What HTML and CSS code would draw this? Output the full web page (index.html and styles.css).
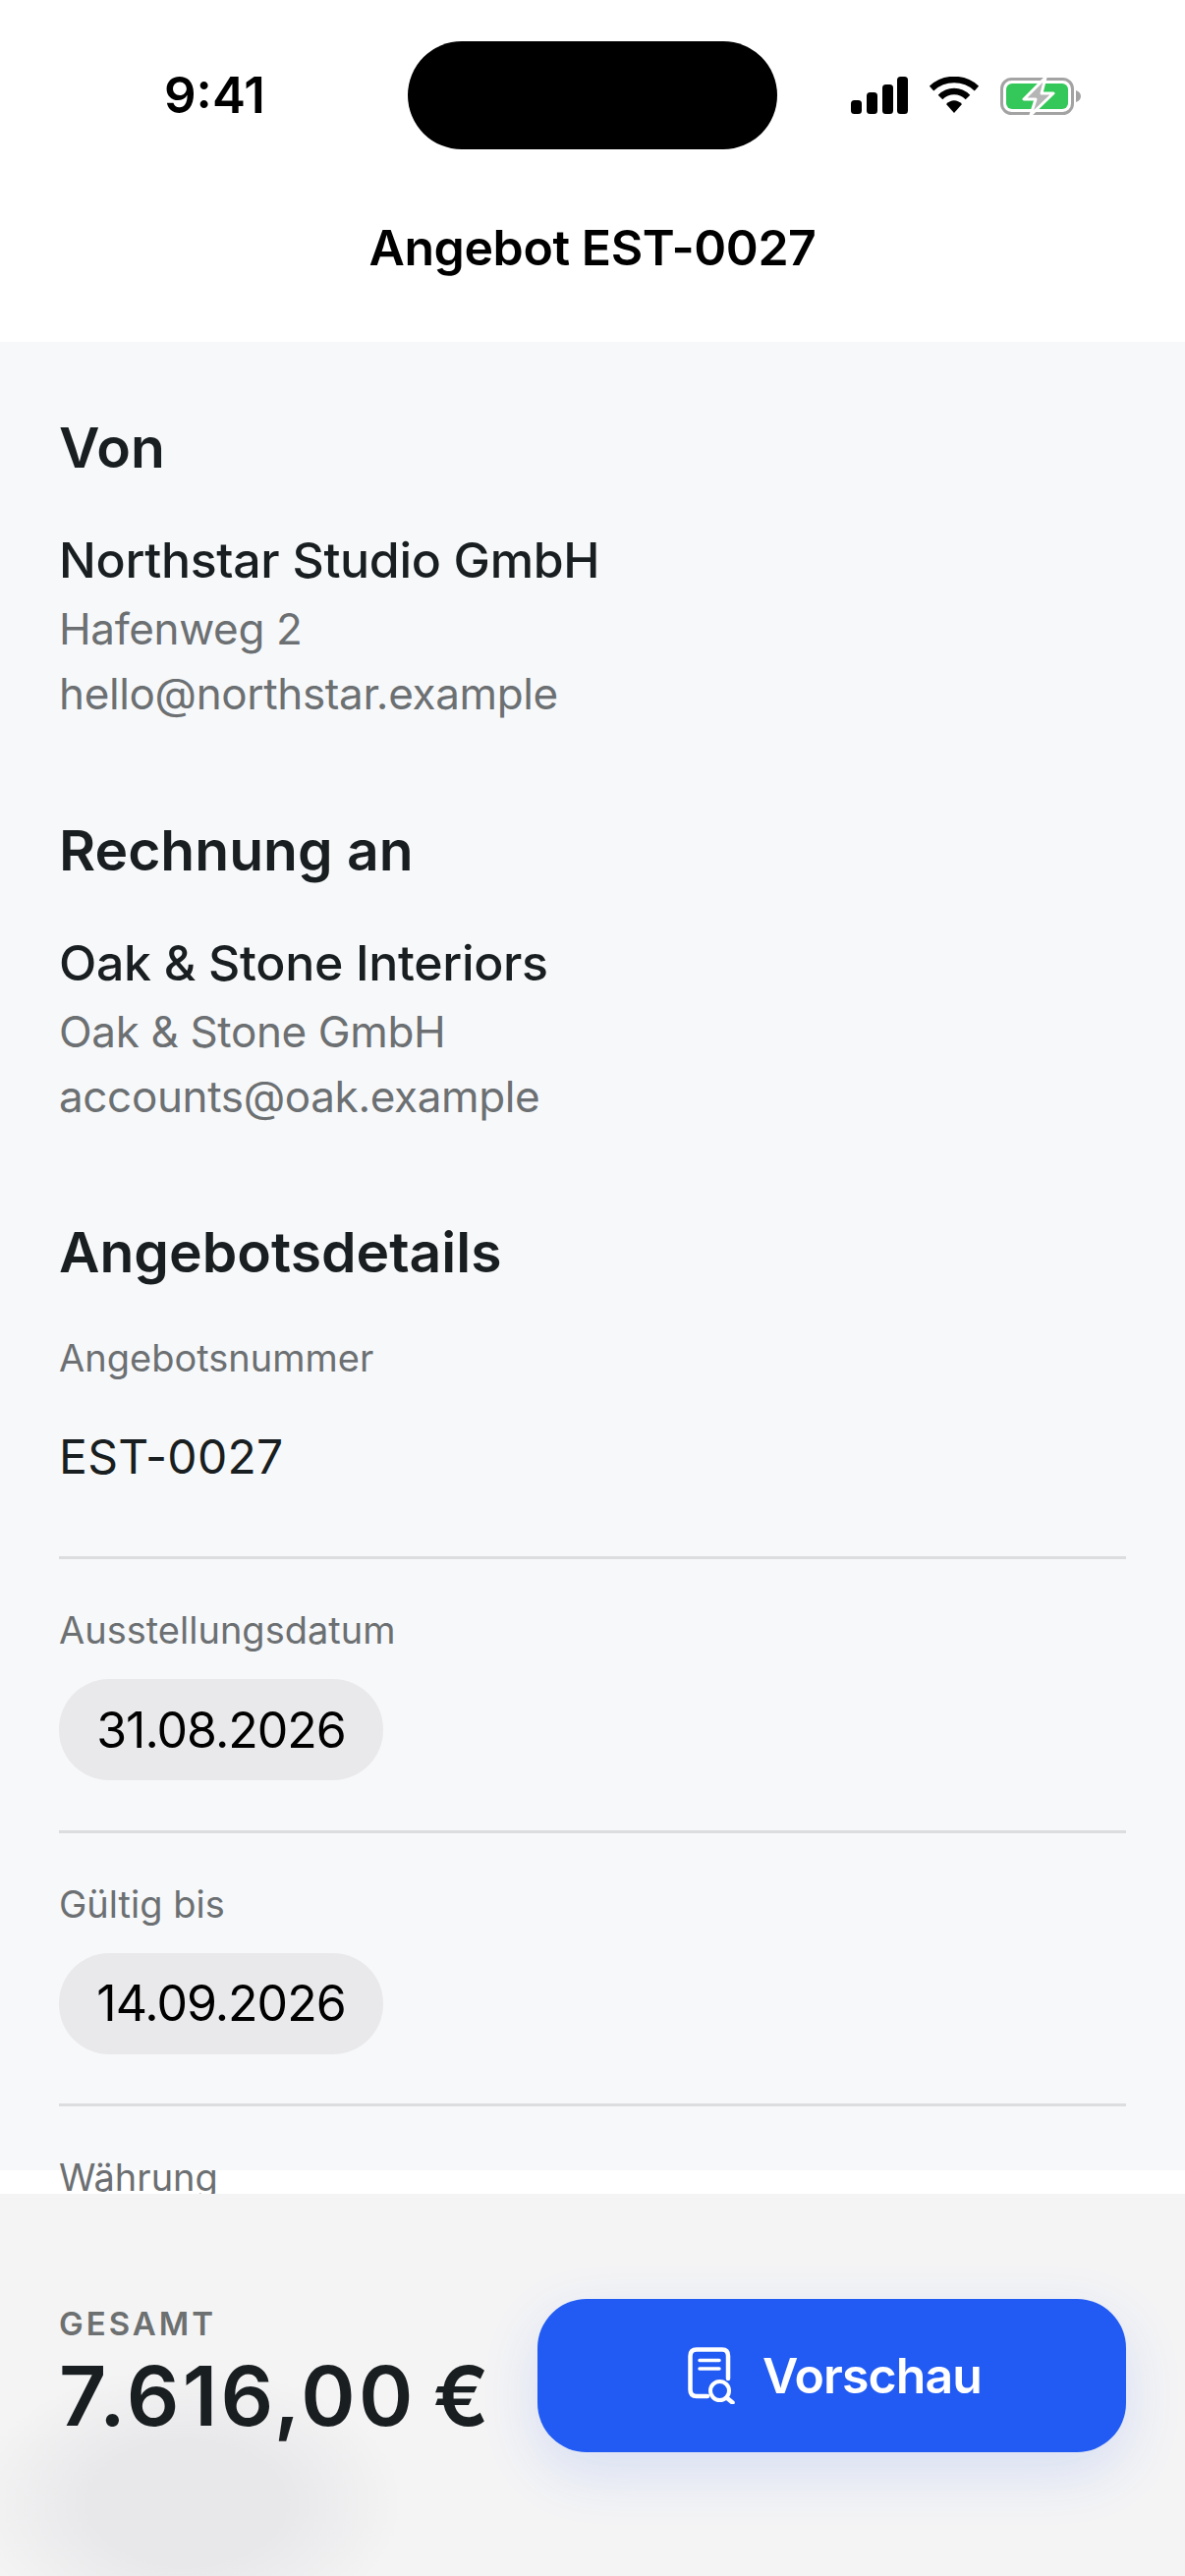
FILE: index.html
```html
<!DOCTYPE html>
<html lang="de">
<head>
    <meta charset="UTF-8">
    <meta name="viewport" content="width=device-width, initial-scale=1.0">
    <title>Angebot EST-0027</title>
    <link rel="stylesheet" href="styles.css">
</head>
<body>

    <div class="phone">
        <header class="top">
            <div class="status-bar">
                <span class="time">9:41</span>
                <div class="island"></div>
                <div class="status-icons">
                    <svg class="signal" width="58" height="38" viewBox="0 0 58 38">
                        <rect x="0" y="24" width="11" height="14" rx="3.5"/>
                        <rect x="16" y="16" width="11" height="22" rx="3.5"/>
                        <rect x="32" y="8" width="11" height="30" rx="3.5"/>
                        <rect x="47" y="0" width="11" height="38" rx="3.5"/>
                    </svg>
                    <svg class="wifi" width="50" height="37" viewBox="0 0 50 37">
                        <path d="M2 12 C15 0 35 0 48 12" fill="none" stroke="#000" stroke-width="6.5"/>
                        <path d="M11 21 C19 13 31 13 39 21" fill="none" stroke="#000" stroke-width="6.5"/>
                        <path d="M17 28 C22 23 28 23 33 28 L25 37 Z"/>
                    </svg>
                    <svg class="battery" width="82" height="40" viewBox="0 0 82 40">
                        <rect x="1.5" y="2.5" width="72" height="35" rx="10" fill="none" stroke="#a3a3a3" stroke-width="3"/>
                        <rect x="6" y="7" width="63" height="26" rx="6" fill="#34c759"/>
                        <path d="M77 14 C80 15 82 17 82 20 C82 23 80 25 77 26 Z" fill="#a3a3a3"/>
                        <path d="M46 1 L24 23 H36 L31 39 L54 17 H42 Z" fill="#b5b5b5" stroke="#fff" stroke-width="3" stroke-linejoin="round"/>
                    </svg>
                </div>
            </div>
            <h1>Angebot EST-0027</h1>
        </header>

        <main class="content">
            <section class="block">
                <h2>Von</h2>
                <p class="name">Northstar Studio GmbH</p>
                <p class="sub">Hafenweg 2</p>
                <p class="sub">hello@northstar.example</p>
            </section>

            <section class="block">
                <h2>Rechnung an</h2>
                <p class="name">Oak &amp; Stone Interiors</p>
                <p class="sub">Oak &amp; Stone GmbH</p>
                <p class="sub">accounts@oak.example</p>
            </section>

            <section class="details">
                <h2>Angebotsdetails</h2>
                <div class="field">
                    <div class="label">Angebotsnummer</div>
                    <div class="value">EST-0027</div>
                </div>
                <div class="field">
                    <div class="label">Ausstellungsdatum</div>
                    <div class="date-pill">31.08.2026</div>
                </div>
                <div class="field">
                    <div class="label">Gültig bis</div>
                    <div class="date-pill">14.09.2026</div>
                </div>
                <div class="field">
                    <div class="label">Währung</div>
                </div>
            </section>
        </main>

        <footer class="bottom-bar">
            <div class="blob"></div>
            <div class="total">
                <div class="total-label">GESAMT</div>
                <div class="total-amount">7.616,00&#8201;€</div>
            </div>
            <button class="preview-btn" type="button">
                <svg width="48" height="58" viewBox="0 0 48 58" fill="none" stroke="#fff" stroke-linecap="round">
                    <path d="M20 50 H9 Q2.5 50 2.5 43.5 V9 Q2.5 2.5 9 2.5 H35 Q41 2.500 41 9 V32" stroke-width="4.500"/>
                    <path d="M12 13.500 H32 M12 22 H32" stroke-width="3.500"/>
                    <circle cx="32.500" cy="44.500" r="9.500" stroke-width="4"/>
                    <path d="M39.500 51.500 L45.500 56.500" stroke-width="4.500"/>
                </svg>
                <span>Vorschau</span>
            </button>
        </footer>
    </div>

</body>
</html>
```

FILE: styles.css
```css
* {
    box-sizing: border-box;
}
body {
    margin: 0;
    font-family: Inter, "Noto Sans", sans-serif;
    background-color: #fff;
    color: #191e20;
}
p, h1, h2 {
    margin: 0;
}
.phone {
    width: 1206px;
    height: 2622px;
    display: flex;
    flex-direction: column;
    overflow: hidden;
}

.top {
    height: 348px;
    background-color: #fff;
    color: #000;
}
.status-bar {
    height: 194px;
    padding: 42px 106px 0 167px;
    display: flex;
    justify-content: space-between;
    align-items: flex-start;
}
.time {
    width: 172px;
    margin-top: 24px;
    font-size: 51px;
    line-height: 62px;
    font-weight: 600;
}
.island {
    width: 376px;
    height: 110px;
    border-radius: 55px;
    background-color: #000;
}
.status-icons {
    margin-top: 36px;
    display: flex;
    gap: 22px;
}
.top h1 {
    font-size: 50px;
    line-height: 62px;
    font-weight: 600;
    letter-spacing: -0.42px;
    text-align: center;
    margin-top: 27px;
}

.content {
    height: 1885px;
    padding: 0 60px;
    overflow: hidden;
    background: linear-gradient(#f7f8fa, #f7f8fa) top / 100% 1861px no-repeat;
}
.block {
    height: 410px;
    padding-top: 73px;
}
h2 {
    font-size: 57px;
    line-height: 70px;
    font-weight: 600;
}
.name {
    margin-top: 48px;
    font-size: 50px;
    line-height: 62px;
    font-weight: 500;
    letter-spacing: -0.32px;
}
.sub {
    font-size: 44px;
    line-height: 66px;
    letter-spacing: -0.36px;
    color: #6c7072;
}
.block .name + .sub {
    margin-top: 6px;
}
.details {
    padding-top: 72px;
}
.field {
    height: 278.5px;
    border-bottom: 3px solid #dcdddf;
}
.label {
    font-size: 38px;
    line-height: 48px;
    color: #6c7072;
    padding-top: 48px;
    box-sizing: content-box;
}
.details h2 + .field {
    height: 277px;
}
.value {
    margin-top: 46px;
    font-size: 48px;
    line-height: 62px;
    letter-spacing: 0.3px;
}
.date-pill {
    display: flex;
    align-items: center;
    justify-content: center;
    width: 330px;
    height: 103px;
    margin-top: 26px;
    border-radius: 51px;
    background-color: #e9e9eb;
    color: #000;
    font-size: 50px;
    letter-spacing: -1px;
}

.bottom-bar {
    position: relative;
    flex: 1;
    padding: 107px 60px 0;
    display: flex;
    justify-content: space-between;
    align-items: flex-start;
    background-color: #f4f4f5;
    overflow: hidden;
}
.blob {
    position: absolute;
    left: -30px;
    top: 175px;
    width: 440px;
    height: 280px;
    border-radius: 50%;
    background: radial-gradient(closest-side, #e8e8ea 45%, rgba(232, 232, 234, 0));
}
.total {
    position: relative;
}
.total-label {
    font-size: 33px;
    line-height: 44px;
    font-weight: 600;
    letter-spacing: 3px;
    color: #6d7070;
    margin-top: 3px;
}
.total-amount {
    font-size: 84px;
    line-height: 100px;
    font-weight: 600;
    letter-spacing: 3.2px;
    margin-top: 2px;
}
.preview-btn {
    width: 599px;
    height: 156px;
    padding: 0 0 0 6px;
    border: none;
    border-radius: 50px;
    background-color: #225bf3;
    box-shadow: 0 20px 60px rgba(34, 91, 243, 0.14);
    color: #fff;
    display: flex;
    align-items: center;
    justify-content: center;
    gap: 28px;
    font-family: inherit;
    font-size: 50px;
    font-weight: 600;
    letter-spacing: -0.9px;
}
```
